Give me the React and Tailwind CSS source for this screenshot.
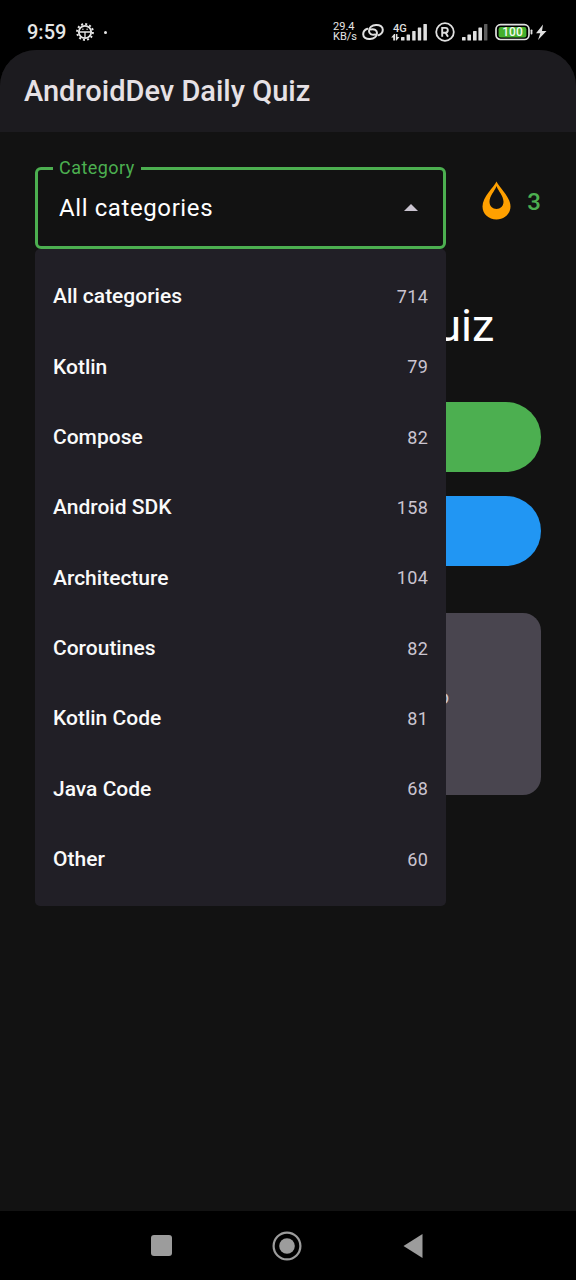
import { useState } from "react";

const CATEGORIES = [
  ["All categories", 714],
  ["Kotlin", 79],
  ["Compose", 82],
  ["Android SDK", 158],
  ["Architecture", 104],
  ["Coroutines", 82],
  ["Kotlin Code", 81],
  ["Java Code", 68],
  ["Other", 60],
];

function GearBugIcon() {
  return (
    <svg viewBox="0 0 18 18" className="h-[18px] w-[18px]" fill="none" stroke="#e6e6e6" aria-hidden="true">
      <circle cx="9" cy="9" r="7.9" strokeWidth="2" strokeDasharray="2 2.136" />
      <circle cx="9" cy="9" r="6.2" strokeWidth="1.8" />
      <path d="M3 9h12M9 9v6" strokeWidth="1.3" />
      <circle cx="6.9" cy="6.3" r="0.7" fill="#e6e6e6" stroke="none" />
      <circle cx="11.1" cy="6.3" r="0.7" fill="#e6e6e6" stroke="none" />
    </svg>
  );
}

function LinkIcon() {
  return (
    <svg viewBox="0 0 22 18" className="h-[18px] w-[22px]" fill="none" stroke="#e0e0e0" strokeWidth="2" strokeLinecap="round" aria-hidden="true">
      <path d="M13.2 11.6C9.6 12.2 7 10.8 7 8C7 4.6 10 2.2 14 2C18 1.8 20.8 3.6 20.8 6.8C20.8 9.4 19.2 11.2 16.6 12.2" />
      <path d="M8.8 6.4C12.4 5.8 15 7.2 15 10C15 13.4 12 15.8 8 16C4 16.2 1.2 14.4 1.2 11.2C1.2 8.6 2.8 6.8 5.4 5.8" />
    </svg>
  );
}

function MobileDataIcon() {
  return (
    <svg viewBox="0 0 37 22" className="h-[22px] w-[37px]" aria-hidden="true">
      <text x="2" y="11" fontSize="11" fontWeight="500" fontFamily="Roboto, sans-serif" fill="#e0e0e0">4G</text>
      <g fill="#e0e0e0">
        <path d="M2.2 19.5V16.5H0.2L3.1 13L4 13V19.5zM4.8 13h1.6v3h2L5.6 19.5H4.8z" />
        <rect x="10" y="16" width="3.5" height="3.5" rx="0.6" />
        <rect x="15.6" y="13.5" width="3.4" height="6" rx="0.6" />
        <rect x="21.2" y="10" width="3.4" height="9.5" rx="0.6" />
        <rect x="26.8" y="6.5" width="3.4" height="13" rx="0.6" />
        <rect x="32.4" y="3" width="3.5" height="16.5" rx="0.6" />
      </g>
    </svg>
  );
}

function RoamingIcon() {
  return (
    <svg viewBox="0 0 20 20" className="h-5 w-5" fill="none" stroke="#e0e0e0" aria-hidden="true">
      <circle cx="10" cy="10" r="8.8" strokeWidth="1.8" />
      <path d="M7.2 14.8V5.9H10.4A2.4 2.4 0 0 1 10.4 10.7H7.2M10.6 10.7L13 14.8" strokeWidth="1.9" />
    </svg>
  );
}

function SignalIcon() {
  return (
    <svg viewBox="0 0 26 18" className="h-[18px] w-[26px]" fill="#e0e0e0" aria-hidden="true">
      <rect x="0" y="14" width="3.6" height="3.5" rx="0.6" />
      <rect x="5.4" y="11.5" width="3.6" height="6" rx="0.6" />
      <rect x="11" y="8" width="3.6" height="9.5" rx="0.6" />
      <rect x="16.4" y="4.5" width="3.6" height="13" rx="0.6" />
      <rect x="22" y="1" width="3.4" height="16.5" rx="0.6" fill="#5c5c5c" />
    </svg>
  );
}

function BatteryIcon() {
  return (
    <svg viewBox="0 0 52 18" className="h-[18px] w-[52px]" aria-hidden="true">
      <rect x="1" y="1.7" width="33" height="14.8" rx="4.5" fill="none" stroke="#e0e0e0" strokeWidth="1.7" />
      <rect x="3.6" y="4" width="27.8" height="10.4" rx="2.2" fill="#45b02e" />
      <text x="17.5" y="13.3" textAnchor="middle" fontSize="12" fontWeight="500" fontFamily="Roboto, sans-serif" fill="#f2fbef">100</text>
      <rect x="35.6" y="6.5" width="1.8" height="5" rx="0.8" fill="#e0e0e0" />
      <path d="M48 1.5L41 10.2H45.3L43 17L51.5 8H47z" fill="#e0e0e0" />
    </svg>
  );
}

function StatusBar() {
  return (
    <div className="flex h-[50px] items-center justify-between bg-black pt-[14px] pr-[29px] pl-[27px] text-[#e6e6e6]">
      <div className="flex items-center">
        <span className="text-xl leading-5 font-medium">9:59</span>
        <span className="ml-[10px]"><GearBugIcon /></span>
        <span className="ml-[10px] h-[3px] w-[3px] rounded-full bg-[#e6e6e6]" />
      </div>
      <div className="flex items-center gap-[7px]">
        <div className="flex items-center gap-[5px]">
          <div className="text-[11px]">
            <div className="h-[10px] leading-[10px]">29.4</div>
            <div className="h-[10px] leading-[10px]">KB/s</div>
          </div>
          <LinkIcon />
        </div>
        <MobileDataIcon />
        <RoamingIcon />
        <SignalIcon />
        <BatteryIcon />
      </div>
    </div>
  );
}

function CategoryMenu({ onPick, selected }) {
  return (
    <ul className="absolute top-full right-0 left-0 z-10 flex min-h-[657px] flex-col rounded-[5px] bg-[#211f26] pt-[13px] pb-[11px]">
      {CATEGORIES.map(([name, count]) => (
        <li key={name} className="flex flex-1">
          <button
            type="button"
            aria-pressed={selected === name}
            onClick={() => onPick(name)}
            className="flex flex-1 items-center justify-between px-[18px] text-left"
          >
            <span className="text-[21px] font-medium text-[#fafafa]">{name}</span>
            <span className="text-lg tracking-wide text-[#cac4d0]">{count}</span>
          </button>
        </li>
      ))}
    </ul>
  );
}

export default function App() {
  const [category, setCategory] = useState("All categories");
  return (
    <div className="flex min-h-screen flex-col bg-black font-[Roboto,'Noto_Sans',sans-serif]">
      <StatusBar />
      <div className="flex flex-1 flex-col overflow-hidden rounded-t-[36px] bg-[#121212]">
        <header className="flex h-[82px] items-center bg-[#1c1b1f] px-6">
          <h1 className="text-[29px] leading-9 font-medium text-[#e6e1e5]">AndroidDev Daily Quiz</h1>
        </header>
        <main className="flex flex-1 flex-col px-[35px] pt-6">
          <div className="flex items-center">
            <div className="relative flex-1">
              <fieldset className="rounded-md border-3 border-[#4caf50] pb-3">
                <legend className="ml-[15px] px-[6px] text-lg leading-6 tracking-wide text-[#4caf50]">
                  <label htmlFor="category">Category</label>
                </legend>
                <div className="flex items-center pr-[25px] pl-[21px]">
                  <select
                    id="category"
                    value={category}
                    onChange={(e) => setCategory(e.target.value)}
                    className="h-[54px] flex-1 appearance-none bg-transparent pt-[2px] text-2xl tracking-wide text-white outline-none"
                  >
                    {CATEGORIES.map(([name]) => (
                      <option key={name}>{name}</option>
                    ))}
                  </select>
                  <svg viewBox="0 0 14 7" className="h-[7px] w-[14px]" aria-hidden="true">
                    <path d="M0 7L7 0L14 7z" fill="#cac4d0" />
                  </svg>
                </div>
              </fieldset>
              <CategoryMenu selected={category} onPick={setCategory} />
            </div>
            <div className="ml-9 flex items-end gap-4 pb-1">
              <svg viewBox="0 0 29 39" className="h-[39px] w-[29px]" aria-hidden="true">
                <path
                  fillRule="evenodd"
                  fill="#ffa000"
                  d="M14.5 0.5C17 6 28.5 16 28.5 25.5C28.5 33 22.3 38.5 14.5 38.5C6.7 38.5 0.5 33 0.5 25.5C0.5 16 12 6 14.5 0.5zM14.5 5C12.8 10 7.5 15 7.5 20.8C7.5 25 10.6 28 14.5 28C18.4 28 21.5 25 21.5 20.8C21.5 15 16.2 10 14.5 5z"
                />
              </svg>
              <span className="text-2xl leading-9 font-medium text-[#4caf50]">3</span>
            </div>
          </div>
          <h2 className="mt-12 text-center text-[45px] leading-[58px] text-white">Welcome to the Quiz</h2>
          <button type="button" className="mt-[47px] h-[70px] rounded-full bg-[#4caf50] text-xl font-medium text-white">
            Daily Quiz
          </button>
          <button type="button" className="mt-6 h-[70px] rounded-full bg-[#2196f3] text-xl font-medium text-white">
            Practice
          </button>
          <section className="mt-[47px] flex h-[182px] items-center justify-center rounded-[18px] bg-[#49454f] pb-3">
            <p className="text-[21px] text-[#cac4d0]">Answer one question per day to go</p>
          </section>
        </main>
      </div>
      <nav className="flex h-[69px] items-center justify-center gap-[98px] bg-black pr-[2px]">
        <button type="button" aria-label="Recent apps" className="flex w-7 justify-center">
          <svg viewBox="0 0 21 21" className="h-[21px] w-[21px]"><rect width="21" height="21" rx="3" fill="#9c9c9c" /></svg>
        </button>
        <button type="button" aria-label="Home" className="flex w-7 justify-center">
          <svg viewBox="0 0 30 30" className="h-[30px] w-[30px] shrink-0">
            <circle cx="15" cy="15" r="13.4" fill="none" stroke="#9c9c9c" strokeWidth="2.2" />
            <circle cx="15" cy="15" r="7.8" fill="#9c9c9c" />
          </svg>
        </button>
        <button type="button" aria-label="Back" className="flex w-7 justify-center">
          <svg viewBox="0 0 20 24" className="h-6 w-5"><path d="M0.5 12L19.5 0V24z" fill="#9c9c9c" /></svg>
        </button>
      </nav>
    </div>
  );
}
